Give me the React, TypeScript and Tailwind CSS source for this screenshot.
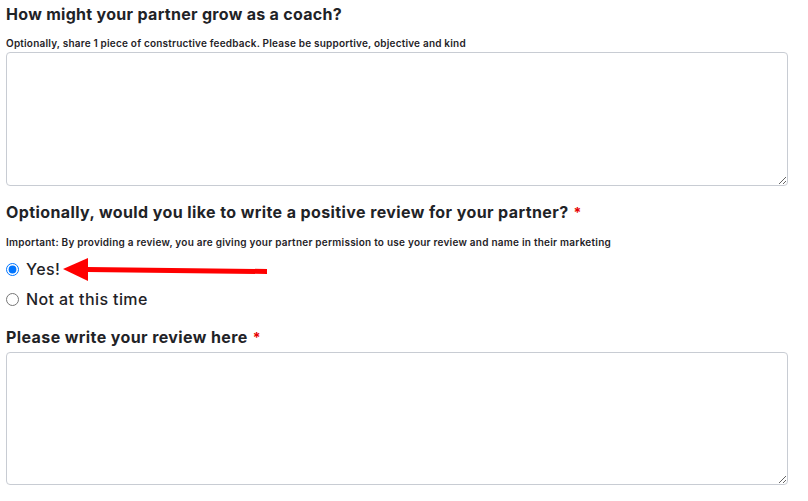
import React, { useState } from 'react';

const font = { fontFamily: 'Inter, "Noto Sans", Arial, sans-serif' };

const Req = () => <span className="ml-[5px] text-[14px] text-[#e60000]">*</span>;

export default function App() {
  const [choice, setChoice] = useState<'yes' | 'no'>('yes');

  return (
    <div className="relative w-[808px] h-[501px] bg-white px-[6px] pt-[4px] text-[#1f2327]" style={font}>
      <h2 className="text-[16px] font-bold leading-[20px] tracking-[0.3px]">How might your partner grow as a coach?</h2>
      <p className="mt-[12px] text-[10px] font-semibold leading-[14px] tracking-[0.2px]">
        Optionally, share 1 piece of constructive feedback. Please be supportive, objective and kind
      </p>
      <textarea className="mt-[2px] block w-[782px] h-[134px] rounded-[4px] border border-[#c8ccd3] bg-white outline-none" />

      <h2 className="mt-[16px] text-[16px] font-bold leading-[20px] tracking-[0.4px]">
        Optionally, would you like to write a positive review for your partner?
        <Req />
      </h2>
      <p className="mt-[12px] text-[10px] font-semibold leading-[14px] tracking-[0.24px]">
        Important: By providing a review, you are giving your partner permission to use your review and name in their marketing
      </p>

      <div className="mt-[8px] flex flex-col gap-[6px]">
        <label className="flex h-[24px] items-center gap-[7px] text-[16px] font-medium tracking-[0.4px]">
          <input
            type="radio"
            name="review"
            checked={choice === 'yes'}
            onChange={() => setChoice('yes')}
            className="m-0 h-[13px] w-[13px]"
          />
          Yes!
        </label>
        <label className="flex h-[24px] items-center gap-[7px] text-[16px] font-medium tracking-[0.4px]">
          <input
            type="radio"
            name="review"
            checked={choice === 'no'}
            onChange={() => setChoice('no')}
            className="m-0 h-[13px] w-[13px]"
          />
          Not at this time
        </label>
      </div>

      <h2 className="mt-[16px] text-[16px] font-bold leading-[20px] tracking-[0.4px]">
        Please write your review here
        <Req />
      </h2>
      <textarea className="mt-[4px] block w-[782px] h-[133px] rounded-[4px] border border-[#c8ccd3] bg-white outline-none" />

      {/* annotation arrow */}
      <svg className="absolute left-[63px] top-[257px]" width="206" height="25" viewBox="0 0 206 25">
        <polygon points="0,12 25,1 25,24" fill="#ff0000" />
        <polygon points="24,10 204,12 204,17 24,15" fill="#ff0000" />
      </svg>
    </div>
  );
}
